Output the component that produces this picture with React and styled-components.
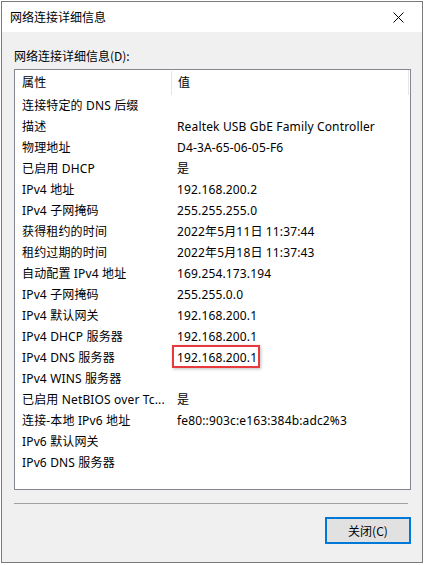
import React from "react";
import styled, { createGlobalStyle } from "styled-components";

const Global = createGlobalStyle`
  html, body { margin: 0; padding: 0; background: #ffffff; }
  body { font-family: "Noto Sans", "Noto Sans CJK SC", sans-serif; font-size: 12px; color: #000; }
  * { box-sizing: border-box; }
`;

const Window = styled.div`
  margin: 1px 0 0 1px;
  width: 422px;
  height: 562px;
  border: 1px solid #7a7a7a;
  display: flex;
  flex-direction: column;
  background: #f0f0f0;
`;

const TitleBar = styled.div`
  height: 30px;
  background: #ffffff;
  display: flex;
  align-items: center;
  justify-content: space-between;
  padding-left: 8px;
  flex: none;
`;

const Title = styled.span`
  font-size: 12px;
  line-height: 16px;
  font-family: "Noto Sans CJK SC", sans-serif;
`;

const CloseBtn = styled.div`
  width: 46px;
  height: 30px;
  display: flex;
  align-items: center;
  justify-content: center;
  margin-right: 1px;
`;

const Body = styled.div`
  flex: 1;
  display: flex;
  flex-direction: column;
  padding: 16px 11px 0 12px;
`;

const Label = styled.div`
  font-family: "Noto Sans CJK SC", sans-serif;
  line-height: 16px;
  height: 16px;
  margin-bottom: 5px;
`;

const ListBox = styled.div`
  height: 421px;
  border: 1px solid #828790;
  background: #ffffff;
  display: flex;
  flex-direction: column;
`;

const Row = styled.div`
  display: grid;
  grid-template-columns: 156px 1fr;
  height: ${(p) => (p.$header ? "25px" : "21px")};
  align-items: center;
`;

const Cell = styled.div`
  position: relative;
  padding-left: ${(p) => (p.$value ? "6px" : "7px")};
  white-space: nowrap;
  overflow: visible;
  line-height: 16px;
  letter-spacing: 0.15px;
  height: 100%;
  display: flex;
  align-items: center;
  border-left: ${(p) => (p.$divider ? "1px solid #e5e5e5" : "none")};
`;

const HeaderRow = styled(Row)`
  border-right: 1px solid #e5e5e5;
  margin-right: 1px;
  padding: 1px 0 0;
`;

const Highlight = styled.div`
  position: absolute;
  left: 1px;
  top: -2px;
  width: 88px;
  height: 23px;
  border: 2px solid #e8393c;
  box-shadow: 1px 1px 3px rgba(0, 0, 0, 0.25);
  pointer-events: none;
`;

const Separator = styled.div`
  height: 1px;
  background: #a0a0a0;
  margin: 13px 3px 0 0;
`;

const Footer = styled.div`
  display: flex;
  justify-content: flex-end;
  margin-top: 13px;
`;

const Button = styled.button`
  width: 86px;
  height: 27px;
  border: 2px solid #0078d7;
  background: #e1e1e1;
  font-family: "Noto Sans CJK SC", sans-serif;
  font-size: 12px;
  color: #000;
  padding: 0;
  margin-right: 0;
`;

const rows = [
  ["连接特定的 DNS 后缀", ""],
  ["描述", "Realtek USB GbE Family Controller"],
  ["物理地址", "D4-3A-65-06-05-F6"],
  ["已启用 DHCP", "是"],
  ["IPv4 地址", "192.168.200.2"],
  ["IPv4 子网掩码", "255.255.255.0"],
  ["获得租约的时间", "2022年5月11日 11:37:44"],
  ["租约过期的时间", "2022年5月18日 11:37:43"],
  ["自动配置 IPv4 地址", "169.254.173.194"],
  ["IPv4 子网掩码", "255.255.0.0"],
  ["IPv4 默认网关", "192.168.200.1"],
  ["IPv4 DHCP 服务器", "192.168.200.1"],
  ["IPv4 DNS 服务器", "192.168.200.1", true],
  ["IPv4 WINS 服务器", ""],
  ["已启用 NetBIOS over Tc...", "是"],
  ["连接-本地 IPv6 地址", "fe80::903c:e163:384b:adc2%3"],
  ["IPv6 默认网关", ""],
  ["IPv6 DNS 服务器", ""],
];

export default function App() {
  return (
    <>
      <Global />
      <Window>
        <TitleBar>
          <Title>网络连接详细信息</Title>
          <CloseBtn>
            <svg width="11" height="11" viewBox="0 0 11 11">
              <path d="M0.5 0.5 L10.5 10.5 M10.5 0.5 L0.5 10.5" stroke="#000" strokeWidth="1" />
            </svg>
          </CloseBtn>
        </TitleBar>
        <Body>
          <Label>网络连接详细信息(D):</Label>
          <ListBox>
            <HeaderRow $header>
              <Cell>属性</Cell>
              <Cell $value $divider>值</Cell>
            </HeaderRow>
            {rows.map(([k, v, hl], i) => (
              <Row key={i}>
                <Cell>{k}</Cell>
                <Cell $value>
                  {v}
                  {hl && <Highlight />}
                </Cell>
              </Row>
            ))}
          </ListBox>
          <Separator />
          <Footer>
            <Button>关闭(C)</Button>
          </Footer>
        </Body>
      </Window>
    </>
  );
}
